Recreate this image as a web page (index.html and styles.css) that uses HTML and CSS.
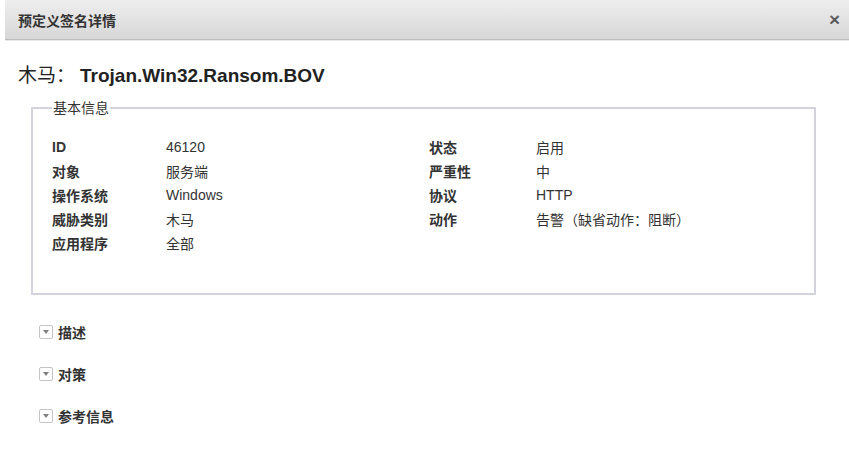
FILE: index.html
```html
<!DOCTYPE html>
<html lang="zh">
<head>
<meta charset="utf-8">
<title>预定义签名详情</title>
<link rel="stylesheet" href="styles.css">
</head>
<body>
<div class="dialog">
  <div class="header">
    <span class="header-title">预定义签名详情</span>
    <span class="close">×</span>
  </div>
  <div class="content">
    <h1 class="sig-title"><span class="cat">木马：</span>Trojan.Win32.Ransom.BOV</h1>
    <fieldset class="basic">
      <legend>基本信息</legend>
      <div class="grid">
        <div class="lbl">ID</div><div class="val">46120</div>
        <div class="lbl">状态</div><div class="val">启用</div>
        <div class="lbl">对象</div><div class="val">服务端</div>
        <div class="lbl">严重性</div><div class="val">中</div>
        <div class="lbl">操作系统</div><div class="val">Windows</div>
        <div class="lbl">协议</div><div class="val">HTTP</div>
        <div class="lbl">威胁类别</div><div class="val">木马</div>
        <div class="lbl">动作</div><div class="val">告警（缺省动作：阻断）</div>
        <div class="lbl">应用程序</div><div class="val">全部</div>
      </div>
    </fieldset>
    <div class="sections">
      <div class="section"><span class="toggle"></span><span class="sec-label">描述</span></div>
      <div class="section"><span class="toggle"></span><span class="sec-label">对策</span></div>
      <div class="section"><span class="toggle"></span><span class="sec-label">参考信息</span></div>
    </div>
  </div>
</div>
</body>
</html>
```
FILE: styles.css
```css
html, body {
  margin: 0;
  padding: 0;
  background: #ffffff;
}
body {
  font-family: "Liberation Sans", "Noto Sans CJK SC", sans-serif;
  font-size: 14px;
  color: #333333;
}
.dialog {
  margin-left: 5px;
  width: 844px;
  height: 454px;
  background: #ffffff;
}
.header {
  height: 40px;
  box-sizing: border-box;
  background: linear-gradient(to bottom, #eeeeee 0%, #d7d7d7 100%);
  border-bottom: 1px solid #bdbdbd;
  box-shadow: 0 1px 0 #e8e8e8;
  display: flex;
  align-items: center;
  justify-content: space-between;
  padding: 0 9px 0 13px;
}
.header-title {
  font-weight: bold;
  font-size: 14px;
  color: #333333;
}
.close {
  font-size: 19px;
  color: #555555;
  line-height: 1;
  -webkit-text-stroke: 0.6px #555555;
}
.content {
  padding: 24px 33px 0 13px;
}
.sig-title {
  margin: 0;
  font-size: 19px;
  line-height: 24px;
  font-weight: bold;
  color: #222222;
}
.sig-title .cat {
  font-weight: normal;
  margin-right: 5px;
}
.basic {
  margin: 11px 0 0 13px;
  padding: 18px 19px 38px 19px;
  border: 2px solid #d3d3de;
  min-width: 0;
}
.basic legend {
  padding: 0 1px;
  margin-left: 0;
  font-size: 14px;
  color: #333333;
  line-height: 18px;
}
.grid {
  display: grid;
  grid-template-columns: 114px 263px 107px 1fr;
  grid-auto-rows: 24px;
  align-items: center;
}
.lbl {
  font-weight: bold;
  color: #333333;
}
.val {
  color: #333333;
}
.sections {
  margin: 26px 0 0 21px;
  display: flex;
  flex-direction: column;
  gap: 21px;
}
.section {
  display: flex;
  align-items: center;
  height: 21px;
}
.toggle {
  width: 14px;
  height: 14px;
  border: 1px solid #c4c4c4;
  border-radius: 2px;
  background: #ffffff;
  position: relative;
  margin-right: 5px;
  box-sizing: border-box;
}
.toggle::after {
  content: "";
  position: absolute;
  left: 3px;
  top: 4px;
  border-left: 3px solid transparent;
  border-right: 3px solid transparent;
  border-top: 4px solid #808080;
}
.sec-label {
  font-weight: bold;
  color: #333333;
}
```
